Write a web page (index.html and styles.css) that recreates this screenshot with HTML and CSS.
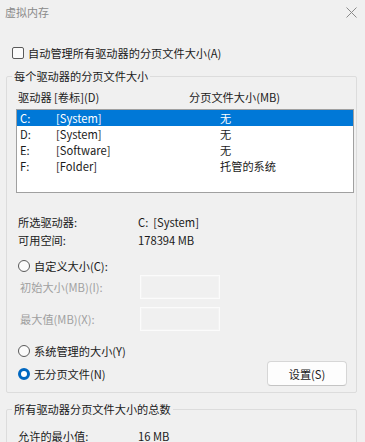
FILE: index.html
```html
<!DOCTYPE html>
<html lang="zh-CN">
<head>
    <meta charset="UTF-8">
    <title>虚拟内存</title>
    <link rel="stylesheet" href="styles.css">
</head>
<body>
    <div class="titlebar">
        <span class="title">虚拟内存</span>
        <svg class="close" width="11" height="11" viewBox="0 0 11 11">
            <path d="M0.5 0.5 L10.5 10.5 M10.5 0.5 L0.5 10.5" stroke="#8a8a8a" stroke-width="1" fill="none"/>
        </svg>
    </div>

    <label class="check-row">
        <input type="checkbox" class="check">
        <span>自动管理所有驱动器的分页文件大小(A)</span>
    </label>

    <!-- 每个驱动器 -->
    <fieldset class="group">
        <legend>每个驱动器的分页文件大小</legend>
        <div class="list-head">
            <span class="col-drive">驱动器 [卷标](D)</span>
            <span>分页文件大小(MB)</span>
        </div>
        <div class="listbox">
            <div class="list-row selected">
                <span class="c1">C:</span><span class="c2">[System]</span><span>无</span>
            </div>
            <div class="list-row">
                <span class="c1">D:</span><span class="c2">[System]</span><span>无</span>
            </div>
            <div class="list-row">
                <span class="c1">E:</span><span class="c2">[Software]</span><span>无</span>
            </div>
            <div class="list-row">
                <span class="c1">F:</span><span class="c2">[Folder]</span><span>托管的系统</span>
            </div>
        </div>

        <div class="info first">
            <span class="info-label">所选驱动器:</span><span>C:&nbsp;&nbsp;[System]</span>
        </div>
        <div class="info">
            <span class="info-label">可用空间:</span><span>178394 MB</span>
        </div>

        <label class="radio-row custom">
            <input type="radio" name="mode" class="radio">
            <span>自定义大小(C):</span>
        </label>
        <div class="field-row initial">
            <span class="field-label">初始大小(MB)(I):</span>
            <input type="text" class="field" disabled>
        </div>
        <div class="field-row max">
            <span class="field-label">最大值(MB)(X):</span>
            <input type="text" class="field" disabled>
        </div>

        <label class="radio-row system">
            <input type="radio" name="mode" class="radio">
            <span>系统管理的大小(Y)</span>
        </label>
        <div class="last-row">
            <label class="radio-row">
                <input type="radio" name="mode" class="radio" checked>
                <span>无分页文件(N)</span>
            </label>
            <button class="set-button">设置(S)</button>
        </div>
    </fieldset>

    <!-- 总数 -->
    <fieldset class="group total">
        <legend>所有驱动器分页文件大小的总数</legend>
        <div class="info total-row">
            <span class="info-label">允许的最小值:</span><span>16 MB</span>
        </div>
    </fieldset>
</body>
</html>
```

FILE: styles.css
```css
body {
    margin: 0;
    background-color: #f0f0f0;
    font-family: "Noto Sans CJK SC", "Noto Sans", sans-serif;
    font-size: 11.2px;
    color: #1a1a1a;
    overflow: hidden;
}
.titlebar {
    height: 24px;
    display: flex;
    align-items: center;
    justify-content: space-between;
    padding: 0 8px 0 5px;
}
.title {
    color: #8a8a8a;
    font-size: 11px;
}
.close {
    margin-top: 1px;
}
.check-row {
    display: flex;
    align-items: center;
    height: 16px;
    margin: 21px 0 0 12px;
}
.check {
    appearance: none;
    width: 12px;
    height: 12px;
    margin: 0 4px 0 0;
    border: 1px solid #5a5a5a;
    border-radius: 2px;
    background: #fbfbfb;
    box-sizing: border-box;
}
.group {
    margin: 7px 8px 0 6px;
    padding: 0 2px 0 11px;
    border: 1px solid #dcdcdc;
    border-radius: 2px;
}
.group legend {
    padding: 0 2px;
    margin-left: -6px;
    line-height: 16px;
}
.list-head {
    display: flex;
    height: 16px;
    line-height: 16px;
    margin-top: 5px;
}
.col-drive {
    width: 171px;
}
.listbox {
    margin: 4px 0 0 -2px;
    height: 82px;
    border: 1px solid #a0a0a0;
    background: #ffffff;
}
.list-row {
    display: flex;
    height: 16px;
    line-height: 16px;
    padding-left: 3px;
}
.list-row.selected {
    background: #0078d7;
    color: #ffffff;
}
.c1 {
    width: 36px;
}
.c2 {
    width: 164px;
}
.info {
    display: flex;
    line-height: 18px;
}
.info.first {
    margin-top: 20px;
}
.info-label {
    width: 120px;
}
.radio-row {
    display: flex;
    align-items: center;
    height: 16px;
}
.radio {
    appearance: none;
    width: 12px;
    height: 12px;
    margin: 0 4px 0 0;
    border: 1px solid #5a5a5a;
    border-radius: 50%;
    background: #fbfbfb;
    box-sizing: border-box;
}
.radio:checked {
    border: 3.5px solid #0067c0;
    background: #ffffff;
}
.custom {
    margin-top: 9px;
}
.field-row {
    display: flex;
    align-items: center;
    height: 24px;
    color: #a0a0a0;
}
.field-row.initial {
    margin-top: 1px;
}
.field-row.max {
    margin-top: 8px;
}
.field-label {
    width: 122px;
    padding-left: 2px;
    box-sizing: border-box;
}
.field {
    width: 80px;
    height: 24px;
    box-sizing: border-box;
    border: 1px solid #fbfbfb;
    box-shadow: inset 0 0 0 1px #f3f3f3;
    background: #f0f0f0;
}
.system {
    margin-top: 12px;
}
.last-row {
    display: flex;
    align-items: center;
    justify-content: space-between;
    height: 25px;
    margin: 2px 0 6px 0;
}
.set-button {
    width: 80px;
    height: 25px;
    margin-right: 7px;
    border: 1px solid #d6d6d6;
    border-bottom-color: #c4c4c4;
    border-radius: 4px;
    background: #fdfdfd;
    font-family: inherit;
    font-size: 11.2px;
    color: #1a1a1a;
}
.group.total {
    margin-top: 8px;
    height: 60px;
}
.total-row {
    margin-top: 10px;
}
```
